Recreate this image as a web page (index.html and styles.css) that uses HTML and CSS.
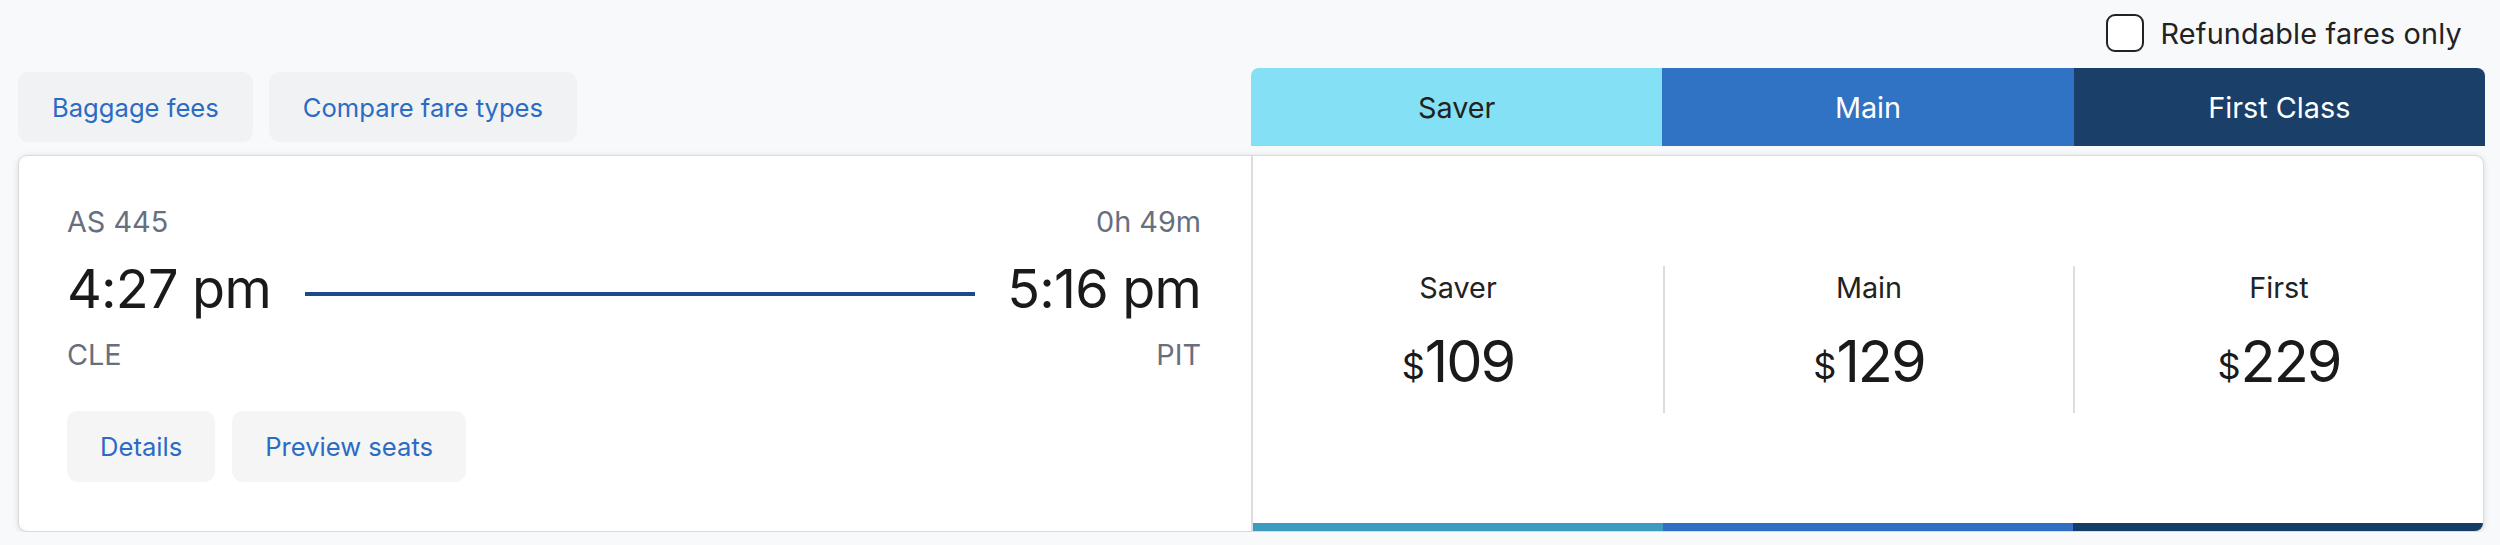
FILE: index.html
```html
<!DOCTYPE html>
<html lang="en">
<head>
<meta charset="utf-8">
<title>Flight results</title>
<link rel="stylesheet" href="styles.css">
</head>
<body>
<div class="page">
  <div class="topbar">
    <label class="refund">
      <span class="checkbox"></span>
      <span class="refund-text">Refundable fares only</span>
    </label>
  </div>
  <div class="grid">
    <div class="actions">
      <button class="btn">Baggage fees</button>
      <button class="btn">Compare fare types</button>
    </div>
    <div class="tabs">
      <div class="tab tab-saver">Saver</div>
      <div class="tab tab-main">Main</div>
      <div class="tab tab-first">First Class</div>
    </div>
    <div class="card">
      <div class="flight">
        <div class="row meta">
          <span>AS 445</span>
          <span>0h 49m</span>
        </div>
        <div class="row times">
          <span class="time">4:27 pm</span>
          <span class="route-line"></span>
          <span class="time">5:16 pm</span>
        </div>
        <div class="row meta">
          <span>CLE</span>
          <span>PIT</span>
        </div>
        <div class="flight-actions">
          <button class="btn btn-sm">Details</button>
          <button class="btn btn-sm">Preview seats</button>
        </div>
      </div>
      <div class="fares">
        <div class="fare-cols">
          <div class="fare">
            <div class="fare-name">Saver</div>
            <div class="fare-price"><span class="cur">$</span>109</div>
          </div>
          <div class="fare">
            <div class="fare-name">Main</div>
            <div class="fare-price"><span class="cur">$</span>129</div>
          </div>
          <div class="fare">
            <div class="fare-name">First</div>
            <div class="fare-price"><span class="cur">$</span>229</div>
          </div>
        </div>
        <div class="fare-bars">
          <span class="bar bar-saver"></span>
          <span class="bar bar-main"></span>
          <span class="bar bar-first"></span>
        </div>
      </div>
    </div>
  </div>
</div>
</body>
</html>
```

FILE: styles.css
```css
* { box-sizing: border-box; }
html, body {
  margin: 0;
  padding: 0;
  background: #f8f9fb;
  font-family: "Inter", "Open Sans", sans-serif;
  color: #222;
}
.page {
  padding: 14px 16px 0 18px;
}
.topbar {
  display: flex;
  justify-content: flex-end;
  padding-right: 22px;
  height: 54px;
}
.refund {
  display: flex;
  align-items: center;
  gap: 16px;
  height: 38px;
}
.checkbox {
  width: 38px;
  height: 38px;
  border: 2px solid #222;
  border-radius: 9px;
  background: #fff;
}
.refund-text {
  font-size: 28.8px;
  color: #222;
  letter-spacing: 0.2px;
}
.grid {
  display: grid;
  grid-template-columns: 1fr 1fr;
  row-gap: 9px;
}
.actions {
  display: flex;
  gap: 16px;
  align-items: flex-start;
  padding-top: 4px;
}
.btn {
  font-family: inherit;
  border: none;
  background: #f1f2f4;
  color: #2a6bc4;
  font-size: 25.6px;
  height: 70px;
  padding: 0 34px;
  border-radius: 11px;
  cursor: pointer;
}
.tabs {
  display: grid;
  grid-template-columns: 1fr 1fr 1fr;
  height: 78px;
  border-radius: 8px 8px 0 0;
  overflow: hidden;
  margin-right: -1px;
}
.tab {
  display: flex;
  align-items: center;
  justify-content: center;
  font-size: 28.8px;
  color: #fff;
}
.tab-saver { background: #84e0f4; color: #222; }
.tab-main { background: #3072c4; }
.tab-first { background: #1a3f69; }
.card {
  grid-column: 1 / 3;
  display: grid;
  grid-template-columns: 1fr 1fr;
  background: #fff;
  border: 1px solid #dadada;
  border-radius: 9px;
  box-shadow: 0 1px 6px rgba(0, 0, 0, 0.12);
  overflow: hidden;
  height: 377px;
}
.flight {
  padding: 48px 50px 0 48px;
}
.row {
  display: flex;
  justify-content: space-between;
  align-items: center;
}
.meta {
  font-size: 28.8px;
  line-height: 36px;
  color: #676f7e;
}
.times {
  margin-top: 17px;
  height: 64px;
}
.time {
  font-size: 54px;
  line-height: 64px;
  color: #1a1a1a;
  letter-spacing: -0.8px;
  white-space: nowrap;
}
.route-line {
  flex: 1;
  height: 4px;
  background: #1d4a8a;
  margin: 10px 32px 0 34px;
}
.times + .meta {
  margin-top: 16px;
}
.flight-actions {
  display: flex;
  gap: 17px;
  margin-top: 38px;
}
.btn-sm {
  background: #f5f5f6;
  height: 71px;
  padding: 0 33px;
}
.fares {
  border-left: 2px solid #dcdcdc;
  display: flex;
  flex-direction: column;
}
.fare-cols {
  flex: 1;
  display: grid;
  grid-template-columns: 1fr 1fr 1fr;
  align-items: center;
}
.fare {
  height: 147px;
  display: flex;
  flex-direction: column;
  align-items: center;
  padding-top: 4px;
}
.fare + .fare {
  border-left: 2px solid #dddddd;
}
.fare-name {
  font-size: 28.8px;
  line-height: 36px;
  color: #222;
}
.fare-price {
  margin-top: 23px;
  font-size: 57.6px;
  line-height: 64px;
  color: #1a1a1a;
  letter-spacing: -2px;
}
.cur {
  font-size: 36px;
  vertical-align: 3px;
  letter-spacing: 0;
}
.fare-bars {
  display: grid;
  grid-template-columns: 1fr 1fr 1fr;
  height: 8px;
}
.bar-saver { background: #3f9ac0; }
.bar-main { background: #2f6fc4; }
.bar-first { background: #133d66; }
```
